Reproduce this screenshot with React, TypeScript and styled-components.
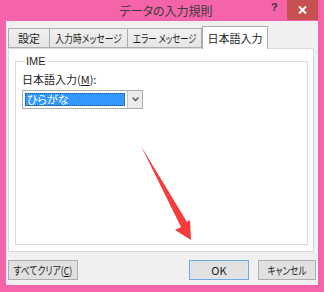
import React from 'react';
import styled, { createGlobalStyle } from 'styled-components';

const GlobalStyle = createGlobalStyle`
  html, body {
    margin: 0;
    padding: 0;
    background: #f563a9;
  }
  body {
    font-family: "Noto Sans CJK JP", "Liberation Sans", sans-serif;
    font-feature-settings: "palt";
  }
`;

const Window = styled.div`
  position: relative;
  width: 324px;
  height: 292px;
  background: #f563a9;
  display: flex;
  flex-direction: column;
  overflow: hidden;
`;

const TitleBar = styled.div`
  height: 21px;
  display: flex;
  align-items: center;
  position: relative;
`;

const Title = styled.div`
  flex: 1;
  text-align: center;
  font-size: 12px;
  color: #3a3a3a;
  padding-left: 8px;
  line-height: 21px;
`;

const Help = styled.div`
  position: absolute;
  left: 271px;
  top: 0;
  width: 10px;
  height: 14px;
  font-family: "Liberation Sans", sans-serif;
  font-size: 11px;
  font-weight: bold;
  color: #333;
  line-height: 14px;
`;

const CloseButton = styled.div`
  position: absolute;
  left: 287px;
  top: 0;
  width: 31px;
  height: 20px;
  background: #c75050;
  display: flex;
  align-items: center;
  justify-content: center;
`;

const Client = styled.div`
  flex: 1;
  margin: 0 6px 7px 6px;
  background: #f0f0f0;
  display: flex;
  flex-direction: column;
  padding: 5px 2px 0 2px;
`;

const TabRow = styled.div`
  display: flex;
  align-items: flex-end;
  height: 22px;
  position: relative;
  z-index: 1;
`;

const Tab = styled.div<{ $w: number; $active?: boolean }>`
  width: ${(p) => p.$w}px;
  flex-shrink: 0;
  height: ${(p) => (p.$active ? 23 : 20)}px;
  margin-bottom: ${(p) => (p.$active ? -1 : 0)}px;
  box-sizing: border-box;
  border: 1px solid #acacac;
  border-bottom: ${(p) => (p.$active ? 'none' : '1px solid #acacac')};
  border-left-width: ${(p) => (p.$active ? 1 : 0)}px;
  background: ${(p) => (p.$active ? '#ffffff' : 'linear-gradient(#f0f0f0, #e5e5e5)')};
  font-size: 11px;
  color: #1e1e1e;
  display: flex;
  align-items: center;
  justify-content: center;
  white-space: nowrap;
  &:first-child {
    border-left-width: 1px;
  }
`;

// Meiryo UI draws kana narrower than Noto does; squeeze the label to match.
const Label = styled.span<{ $sx?: number }>`
  display: inline-block;
  flex-shrink: 0;
  white-space: nowrap;
  transform: scaleX(${(p) => p.$sx ?? 1});
  transform-origin: center;
`;

const Panel = styled.div`
  box-sizing: border-box;
  width: 306px;
  height: 204px;
  background: #ffffff;
  border: 1px solid #d9d9d9;
  padding: 7px 5px 6px 6px;
  display: flex;
`;

const GroupBox = styled.fieldset`
  margin: 0;
  flex: 1;
  border: 1px solid #dcdcdc;
  padding: 2px 6px 0 6px;
  min-width: 0;
  display: flex;
  flex-direction: column;
`;

const Legend = styled.legend`
  font-family: "Liberation Sans", sans-serif;
  font-size: 11px;
  color: #1e1e1e;
  padding: 0 1px;
  margin-left: 3px;
  line-height: 11px;
`;

const FieldLabel = styled.div`
  font-size: 11px;
  color: #1e1e1e;
  line-height: 14px;
  margin-top: 3px;
  u {
    text-decoration: underline;
  }
`;

const Select = styled.div`
  margin-top: 4px;
  width: 121px;
  height: 19px;
  box-sizing: border-box;
  border: 1px solid #abadb3;
  background: #ffffff;
  display: flex;
  align-items: stretch;
`;

const SelectValue = styled.div`
  flex: 1;
  margin: 2px;
  background: #3399ff;
  outline: 1px dotted #1a4f86;
  outline-offset: -1px;
  color: #ffffff;
  font-size: 11px;
  line-height: 12px;
  padding-left: 2px;
`;

const SelectArrow = styled.div`
  width: 15px;
  box-sizing: border-box;
  border-left: 1px solid #c5c5c5;
  background: #ececec;
  display: flex;
  align-items: center;
  justify-content: center;
`;

const ButtonRow = styled.div`
  display: flex;
  align-items: center;
  gap: 9px;
  margin-top: 8px;
`;

const Spacer = styled.div`
  flex: 1;
`;

const Button = styled.div<{ $w: number; $primary?: boolean }>`
  width: ${(p) => p.$w}px;
  flex-shrink: 0;
  height: 20px;
  box-sizing: border-box;
  border: 1px solid ${(p) => (p.$primary ? '#72a8e0' : '#adadad')};
  box-shadow: ${(p) => (p.$primary ? 'inset 0 0 0 1px #d9e9f8' : 'none')};
  background: #e1e1e1;
  font-size: 11px;
  color: #1e1e1e;
  display: flex;
  align-items: center;
  justify-content: center;
  white-space: nowrap;
  u {
    text-decoration: underline;
  }
`;

const Arrow = styled.svg`
  position: absolute;
  left: 0;
  top: 0;
  pointer-events: none;
`;

export default function App() {
  return (
    <>
      <GlobalStyle />
      <Window>
        <TitleBar>
          <Title>データの入力規則</Title>
          <Help>?</Help>
          <CloseButton>
            <svg width="9" height="8" viewBox="0 0 9 8">
              <path d="M1 0.5 L8 7.5 M8 0.5 L1 7.5" stroke="#ffffff" strokeWidth="2" />
            </svg>
          </CloseButton>
        </TitleBar>
        <Client>
          <TabRow>
            <Tab $w={42}>
              <Label>設定</Label>
            </Tab>
            <Tab $w={78}>
              <Label $sx={0.8}>入力時メッセージ</Label>
            </Tab>
            <Tab $w={74}>
              <Label $sx={0.76}>エラー メッセージ</Label>
            </Tab>
            <Tab $w={66} $active>
              <Label>日本語入力</Label>
            </Tab>
          </TabRow>
          <Panel>
            <GroupBox>
              <Legend>IME</Legend>
              <FieldLabel>
                日本語入力(<u>M</u>):
              </FieldLabel>
              <Select>
                <SelectValue>ひらがな</SelectValue>
                <SelectArrow>
                  <svg width="7" height="5" viewBox="0 0 7 5">
                    <path d="M0.5 0.5 L3.5 3.5 L6.5 0.5" fill="none" stroke="#555" strokeWidth="1.4" />
                  </svg>
                </SelectArrow>
              </Select>
            </GroupBox>
          </Panel>
          <ButtonRow>
            <Button $w={70}>
              <Label $sx={0.8}>
                すべてクリア(<u>C</u>)
              </Label>
            </Button>
            <Spacer />
            <Button $w={60} $primary>
              <Label>OK</Label>
            </Button>
            <Button $w={58}>
              <Label $sx={0.78}>キャンセル</Label>
            </Button>
          </ButtonRow>
        </Client>
        <Arrow width="324" height="292" viewBox="0 0 324 292">
          <path d="M141 146 L187 222 L190 220 L191 240 L175 230 L181 227 Z" fill="#f53b3b" />
        </Arrow>
      </Window>
    </>
  );
}
